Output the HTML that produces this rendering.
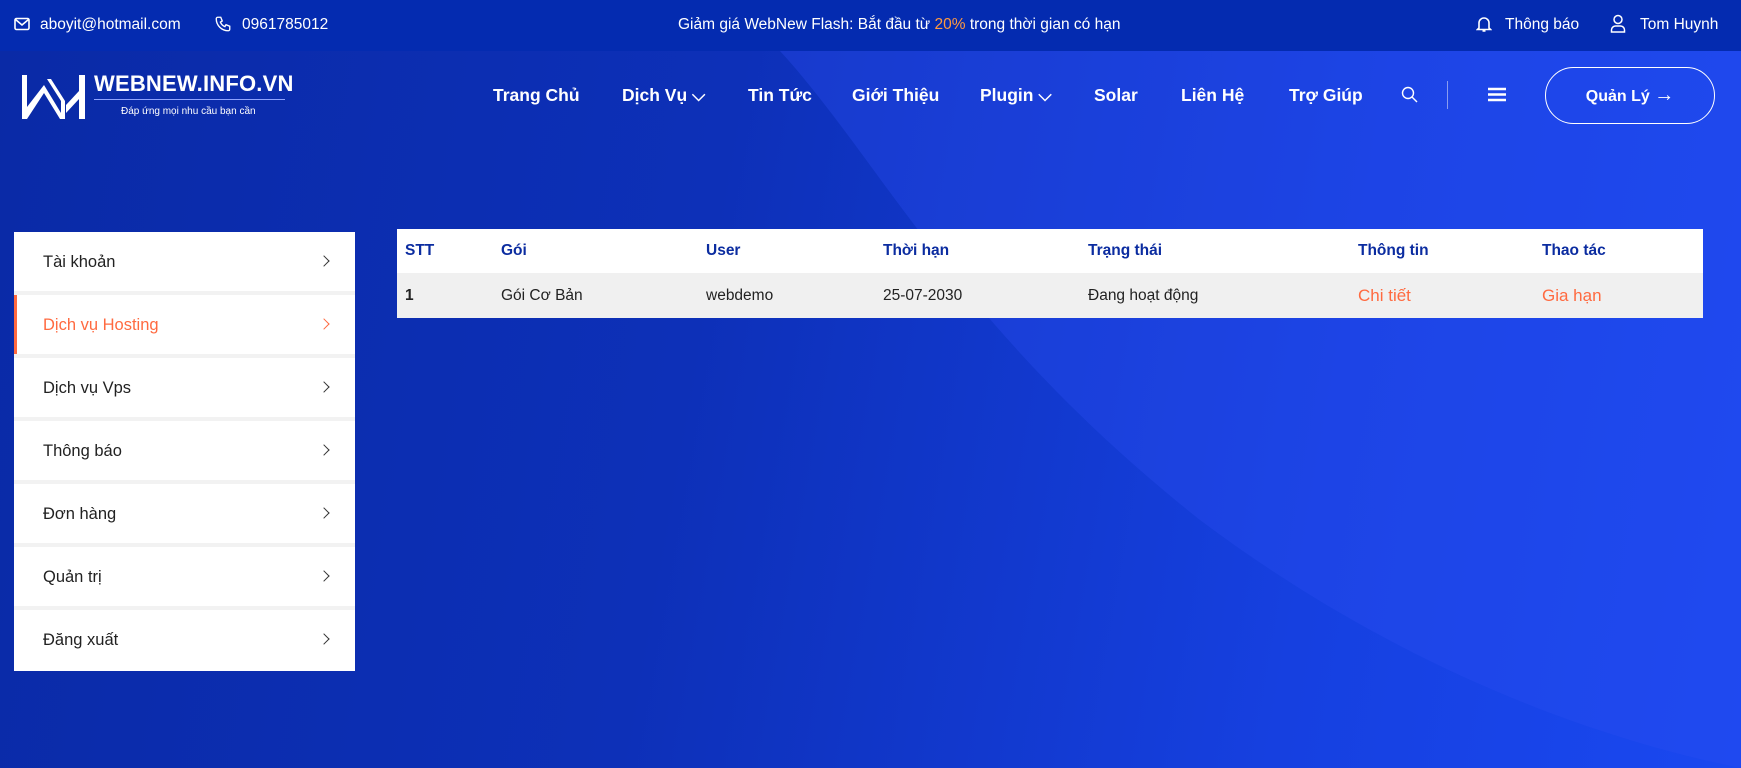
<!DOCTYPE html>
<html><head><meta charset="utf-8"><style>
*{margin:0;padding:0;box-sizing:border-box}
body{width:1741px;height:768px;overflow:hidden;font-family:"Liberation Sans","Noto Sans CJK SC",sans-serif;color:#fff;position:relative;
background:linear-gradient(100deg,#0a2aa6 0%,#0d30b8 40%,#1640e0 75%,#1a48f0 100%);}
.curve{position:absolute;left:0;top:0;width:1741px;height:768px}
.top{position:absolute;left:0;top:0;width:1741px;height:51px;background:#042bb0;font-size:15.5px;font-weight:500}
.top span{position:absolute;top:16px;white-space:nowrap}
.nav span{position:absolute;top:85px;font-size:17.5px;font-weight:bold;white-space:nowrap}
.side{position:absolute;left:14px;top:232px;width:341px;height:439px;background:#f2f2f2}
.item{position:absolute;left:0;width:341px;height:59px;background:#fff;color:#222;font-size:16.5px}
.item span{position:absolute;left:29px;top:21px}
.item i{position:absolute;left:306px;top:25px;width:8px;height:8px;border-right:1.5px solid #333;border-top:1.5px solid #333;transform:rotate(45deg)}
.item.act{color:#ff6a40;border-left:3px solid #ff6a40}
.item.act span{left:26px}.item.act i{border-color:#ff6a40;left:303px}
.tbl{position:absolute;left:397px;top:229px;width:1306px;height:89px;background:#fff;font-size:15.5px}
.tbl .r2{position:absolute;left:0;top:44px;width:1306px;height:45px;background:#f0f0f0}
.tbl span{position:absolute;white-space:nowrap}
.h{top:13px;color:#0b2ca0;font-weight:bold}
.d{top:58px;color:#222}
.o{color:#ff6a40;font-size:17px;top:57px}
</style></head><body>
<svg class="curve" viewBox="0 0 1741 768"><path d="M780 51 C880 160 960 330 1200 520 C1400 670 1600 740 1741 768 L1741 51 Z" fill="#2a4df0" opacity="0.35"/></svg>
<div class="top">
<svg style="position:absolute;left:14px;top:17px" width="16" height="14" viewBox="0 0 16 14"><rect x="1" y="1.5" width="14" height="11" rx="1.5" fill="none" stroke="#fff" stroke-width="1.6"/><path d="M1.5 2.5 L8 8 L14.5 2.5" fill="none" stroke="#fff" stroke-width="1.6"/></svg>
<span style="left:40px">aboyit@hotmail.com</span>
<svg style="position:absolute;left:214px;top:15px" width="18" height="18" viewBox="0 0 24 24"><path d="M5 3h4l2 5-2.5 1.5a11 11 0 0 0 6 6L16 13l5 2v4a2 2 0 0 1-2 2A16 16 0 0 1 3 5a2 2 0 0 1 2-2" fill="none" stroke="#fff" stroke-width="1.8"/></svg>
<span style="left:242px">0961785012</span>
<span style="left:678px">Giảm giá WebNew Flash: Bắt đầu từ <b style="color:#ff9a40;font-weight:500">20%</b> trong thời gian có hạn</span>
<svg style="position:absolute;left:1476px;top:15px" width="16" height="18" viewBox="0 0 16 18"><path d="M3 13V8a5 5 0 0 1 10 0v5l1.5 1.5h-13Z M6.5 16h3" fill="none" stroke="#fff" stroke-width="1.6"/></svg>
<span style="left:1505px">Thông báo</span>
<svg style="position:absolute;left:1610px;top:14px" width="16" height="19" viewBox="0 0 16 19"><circle cx="8" cy="5.5" r="4" fill="none" stroke="#fff" stroke-width="1.5"/><path d="M1.5 18v-2a4 4 0 0 1 4-4h5a4 4 0 0 1 4 4v2Z" fill="none" stroke="#fff" stroke-width="1.5"/></svg>
<span style="left:1640px">Tom Huynh</span>
</div>
<svg style="position:absolute;left:22px;top:75px" width="64" height="44" viewBox="0 0 64 44"><path d="M0 0h5v34L20 12l17 26" fill="none" stroke="#fff" stroke-width="0"/><path d="M0 0h5v32L22 10l17 28V26L25 4h4l14 22V44h-5L22 18 5 44H0Z" fill="#fff"/><path d="M57 0h6v44h-6Z M44 30l13-14v8l-13 14Z" fill="#fff"/></svg>
<div style="position:absolute;left:94px;top:71px;font-size:22px;font-weight:bold;letter-spacing:0.2px">WEBNEW.INFO.VN</div>
<div style="position:absolute;left:94px;top:99px;width:191px;height:1px;background:#8fa3ff"></div>
<div style="position:absolute;left:121px;top:106px;font-size:10px">Đáp ứng mọi nhu cầu bạn cần</div>
<div class="nav">
<span style="left:493px">Trang Chủ</span>
<span style="left:622px">Dịch Vụ ⌵</span>
<span style="left:748px">Tin Tức</span>
<span style="left:852px">Giới Thiệu</span>
<span style="left:980px">Plugin ⌵</span>
<span style="left:1094px">Solar</span>
<span style="left:1181px">Liên Hệ</span>
<span style="left:1289px">Trợ Giúp</span>
</div>
<svg style="position:absolute;left:1401px;top:86px" width="17" height="17" viewBox="0 0 17 17"><circle cx="7" cy="7" r="5.5" fill="none" stroke="#fff" stroke-width="1.4"/><path d="M11 11l5 5" stroke="#fff" stroke-width="1.4"/></svg>
<div style="position:absolute;left:1447px;top:81px;width:1px;height:28px;background:#8a9cf0"></div>
<svg style="position:absolute;left:1488px;top:87px" width="18" height="15" viewBox="0 0 18 15"><path d="M0 2h18M0 7.5h18M0 13h18" stroke="#fff" stroke-width="2.6"/></svg>
<div style="position:absolute;left:1545px;top:67px;width:170px;height:57px;border:1.5px solid #fff;border-radius:29px;font-size:16px;font-weight:bold;text-align:center;line-height:54px">Quản Lý <span style="font-size:20px">→</span></div>
<div class="side">
<div class="item" style="top:0"><span>Tài khoản</span><i></i></div>
<div class="item act" style="top:63px"><span>Dịch vụ Hosting</span><i></i></div>
<div class="item" style="top:126px"><span>Dịch vụ Vps</span><i></i></div>
<div class="item" style="top:189px"><span>Thông báo</span><i></i></div>
<div class="item" style="top:252px"><span>Đơn hàng</span><i></i></div>
<div class="item" style="top:315px"><span>Quản trị</span><i></i></div>
<div class="item" style="top:378px;height:61px"><span>Đăng xuất</span><i></i></div>
</div>
<div class="tbl"><div class="r2"></div>
<span class="h" style="left:8px">STT</span><span class="h" style="left:104px">Gói</span><span class="h" style="left:309px">User</span><span class="h" style="left:486px">Thời hạn</span><span class="h" style="left:691px">Trạng thái</span><span class="h" style="left:961px">Thông tin</span><span class="h" style="left:1145px">Thao tác</span>
<span class="d" style="left:8px;font-weight:bold">1</span><span class="d" style="left:104px">Gói Cơ Bản</span><span class="d" style="left:309px">webdemo</span><span class="d" style="left:486px">25-07-2030</span><span class="d" style="left:691px">Đang hoạt động</span><span class="d o" style="left:961px">Chi tiết</span><span class="d o" style="left:1145px">Gia hạn</span>
</div>
</body></html>
